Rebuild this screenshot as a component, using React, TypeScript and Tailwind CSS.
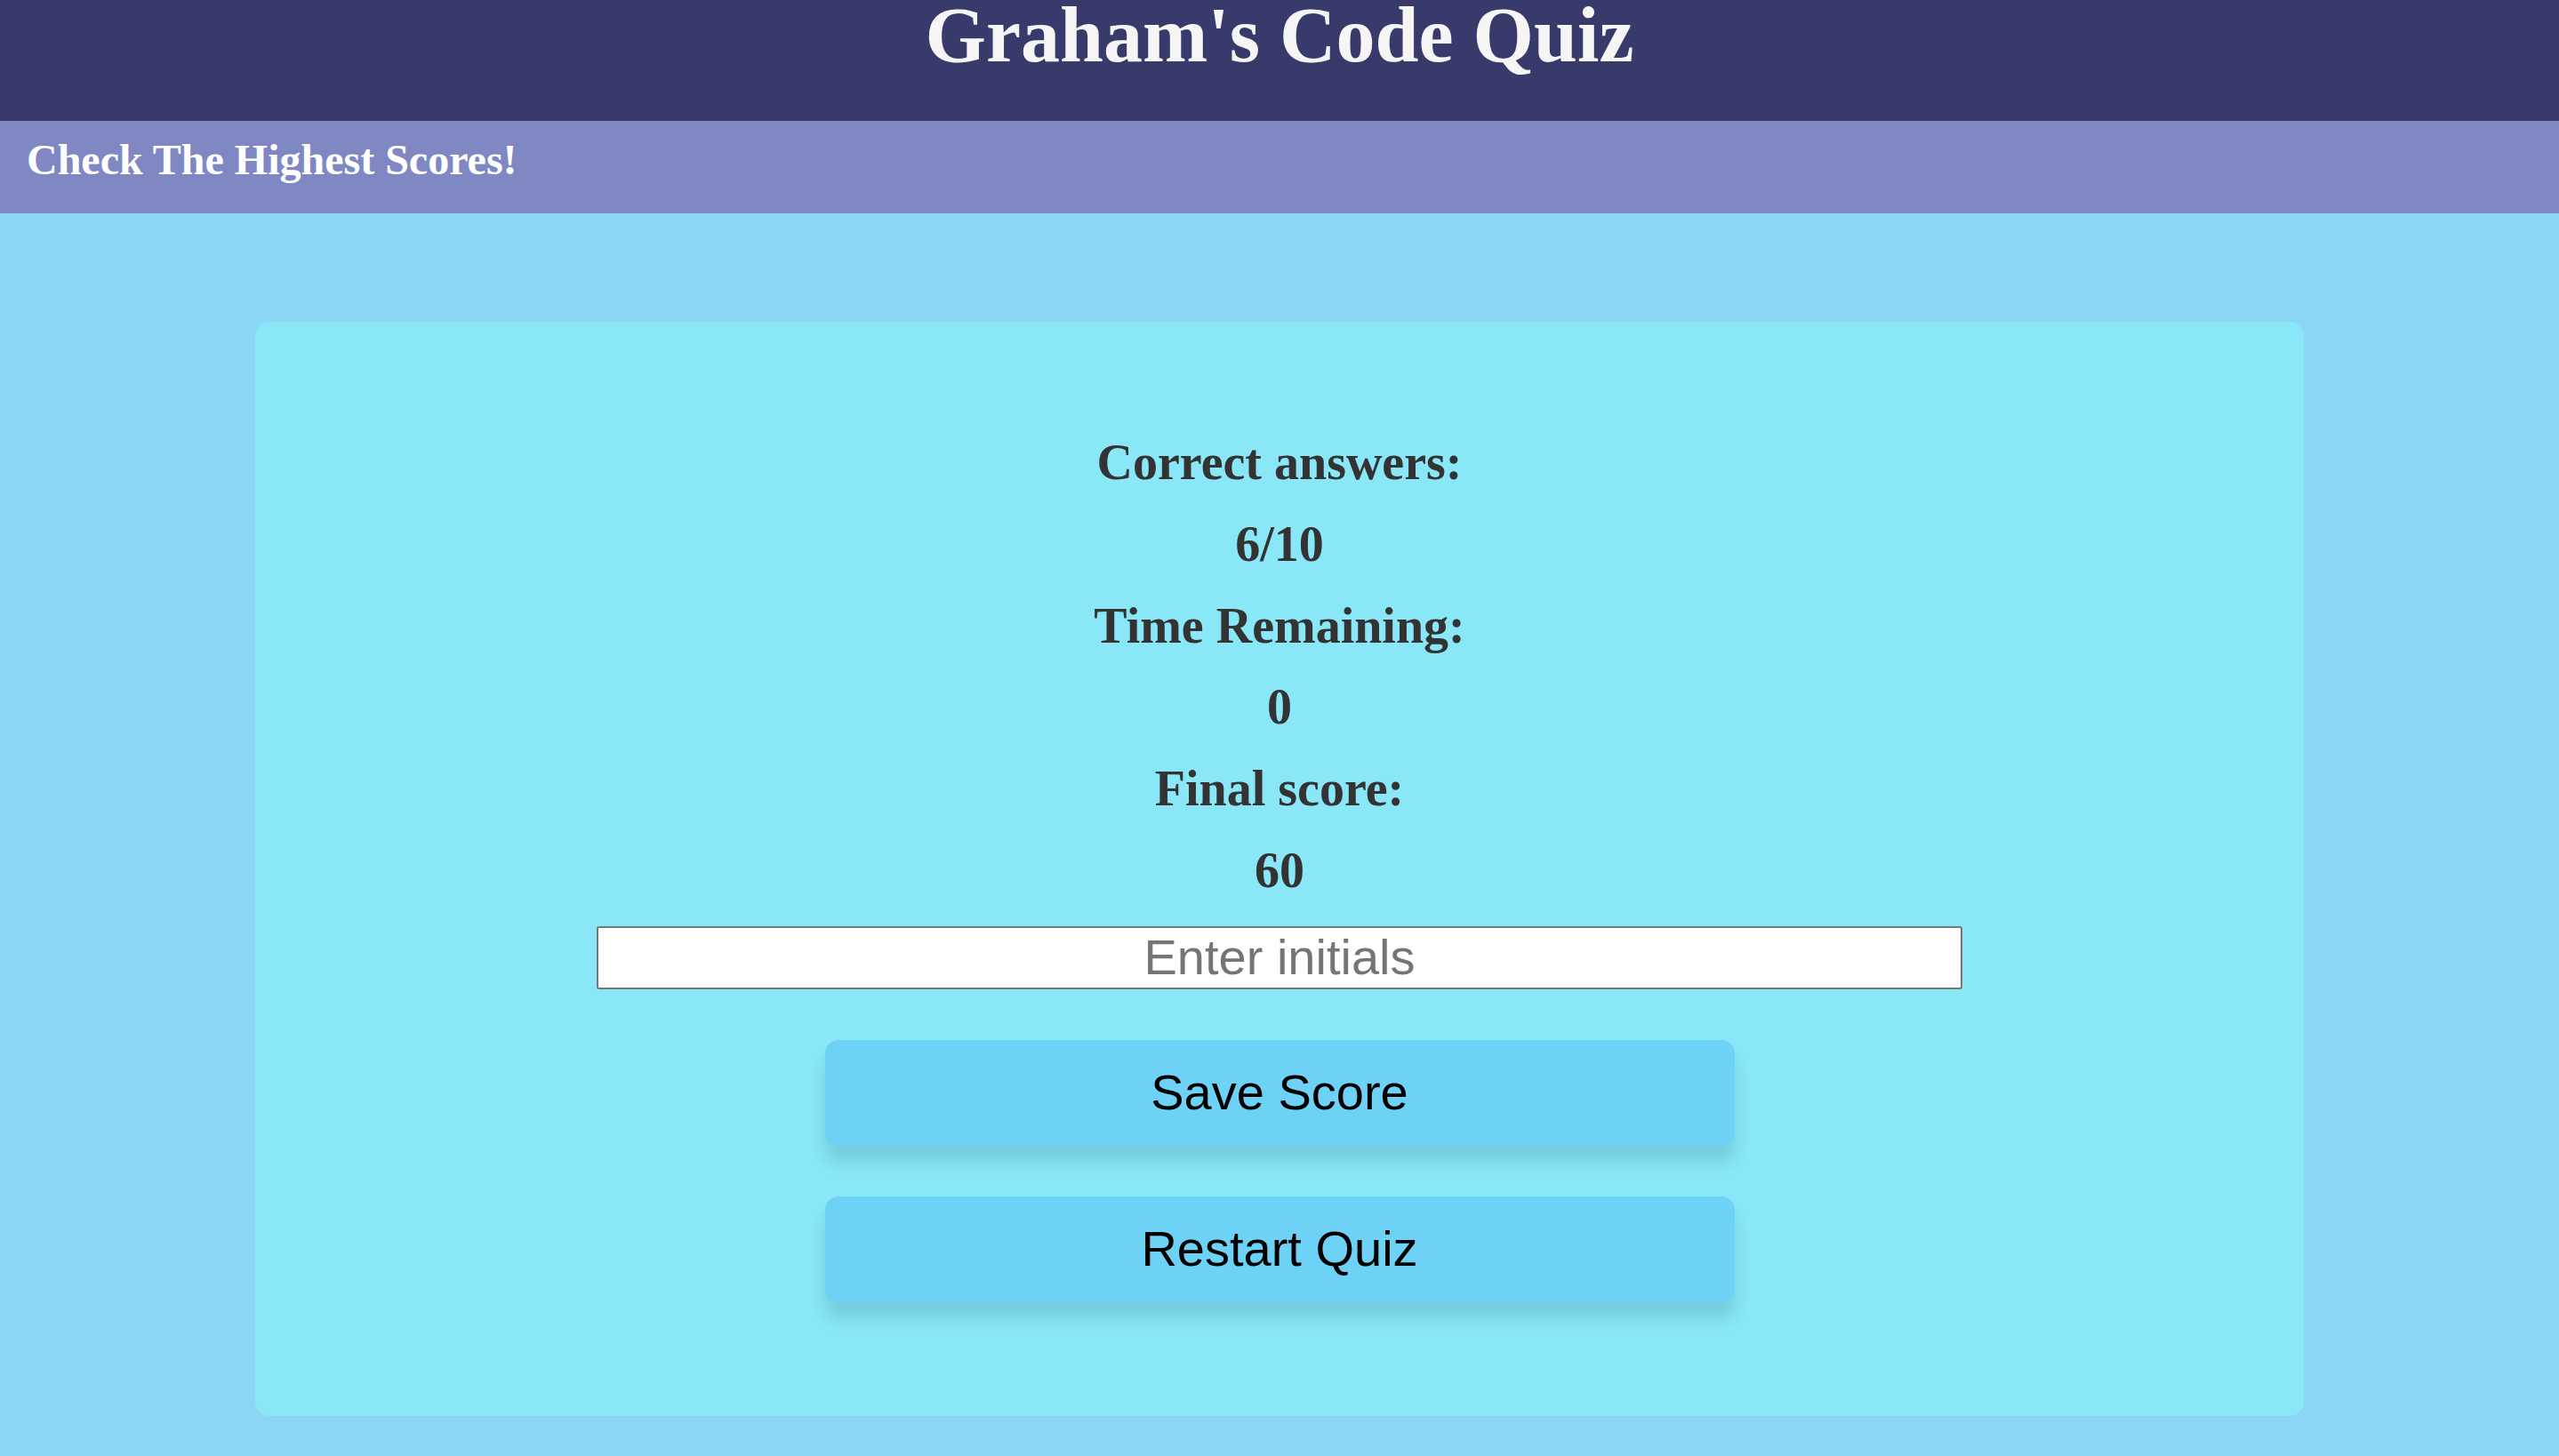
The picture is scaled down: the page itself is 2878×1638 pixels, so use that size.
import React from "react";

export default function App() {
  const serif = { fontFamily: '"Liberation Serif", "Times New Roman", serif' };
  const sans = { fontFamily: '"Liberation Sans", Arial, sans-serif' };
  return (
    <div className="min-h-[1638px] w-full bg-[#8cd6f5]" style={serif}>
      <header className="h-[136px] bg-[#373a6b] flex justify-center">
        <h1 className="m-0 text-[88px] leading-[80px] font-bold text-[#f5f5f5]">Graham's Code Quiz</h1>
      </header>
      <nav className="h-[104px] bg-[#8088c4] pt-[20px] px-[30px]">
        <span className="block text-[48px] leading-none font-bold text-white">Check The Highest Scores!</span>
      </nav>
      <main className="pt-[122px]">
        <section className="w-[2304px] h-[1231px] mx-auto bg-[#89e7f8] rounded-[16px] pt-[113px] flex flex-col items-center">
          <div className="flex flex-col items-center text-[56px] leading-[91.8px] font-bold text-[#333333]">
            <p>Correct answers:</p>
            <p>6/10</p>
            <p>Time Remaining:</p>
            <p>0</p>
            <p>Final score:</p>
            <p>60</p>
          </div>
          <input
            type="text"
            placeholder="Enter initials"
            className="mt-[16px] w-[1536px] h-[71px] border-2 border-[#767676] bg-white text-center text-[56px] placeholder:text-[#757575] rounded-[3px]"
            style={sans}
          />
          <button
            className="mt-[57px] w-[1023px] h-[119px] rounded-[15px] bg-[#6dd2f5] text-black text-[56px] shadow-[0_18px_18px_rgba(0,40,60,0.14)]"
            style={sans}
          >
            Save Score
          </button>
          <button
            className="mt-[57px] w-[1023px] h-[119px] rounded-[15px] bg-[#6dd2f5] text-black text-[56px] shadow-[0_18px_18px_rgba(0,40,60,0.14)]"
            style={sans}
          >
            Restart Quiz
          </button>
        </section>
      </main>
    </div>
  );
}
